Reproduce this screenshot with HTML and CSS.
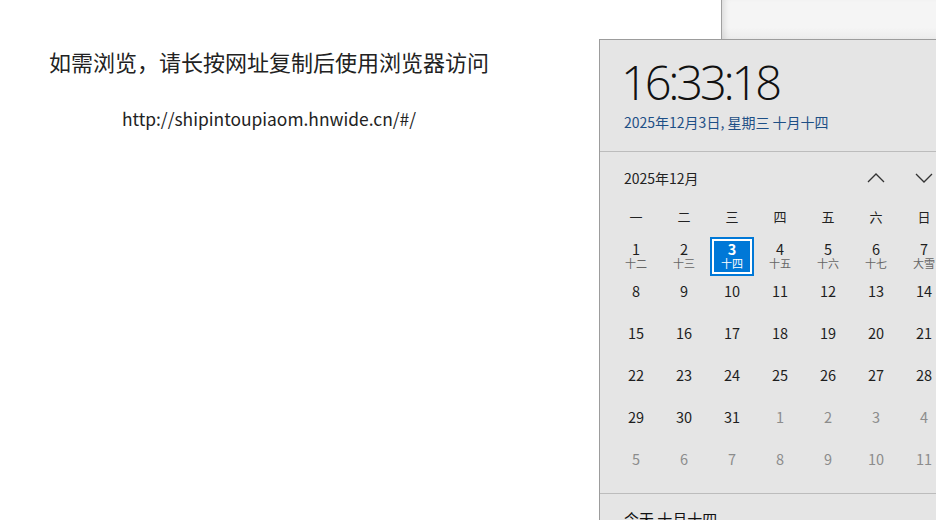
FILE: index.html
```html
<!DOCTYPE html>
<html lang="zh-CN">
<head>
    <meta charset="UTF-8">
    <meta name="viewport" content="width=device-width, initial-scale=1.0">
    <link rel="stylesheet" href="styles.css">
</head>
<body>
    <div class="page">
        <h1 class="notice">如需浏览，请长按网址复制后使用浏览器访问</h1>
        <p class="link">http://shipintoupiaom.hnwide.cn/#/</p>
    </div>

    <div class="back-window"></div>

    <div class="flyout">
        <div class="clock">
            <div class="time">16:33:18</div>
            <div class="date">2025年12月3日, 星期三 十月十四</div>
        </div>

        <div class="calendar">
            <div class="month-bar">
                <span class="month">2025年12月</span>
                <div class="arrows">
                    <svg width="48" height="20" viewBox="0 0 48 20">
                        <polyline points="16,14 24,6 32,14" fill="none" stroke="#333" stroke-width="1.3"/>
                    </svg>
                    <svg width="48" height="20" viewBox="0 0 48 20">
                        <polyline points="16,6 24,14 32,6" fill="none" stroke="#333" stroke-width="1.3"/>
                    </svg>
                </div>
            </div>

            <div class="grid">
                <div class="wd">一</div><div class="wd">二</div><div class="wd">三</div><div class="wd">四</div><div class="wd">五</div><div class="wd">六</div><div class="wd">日</div>

                <div class="day"><span class="n">1</span><span class="l">十二</span></div>
                <div class="day"><span class="n">2</span><span class="l">十三</span></div>
                <div class="day today"><span class="n">3</span><span class="l">十四</span></div>
                <div class="day"><span class="n">4</span><span class="l">十五</span></div>
                <div class="day"><span class="n">5</span><span class="l">十六</span></div>
                <div class="day"><span class="n">6</span><span class="l">十七</span></div>
                <div class="day"><span class="n">7</span><span class="l">大雪</span></div>

                <div class="day"><span class="n">8</span></div>
                <div class="day"><span class="n">9</span></div>
                <div class="day"><span class="n">10</span></div>
                <div class="day"><span class="n">11</span></div>
                <div class="day"><span class="n">12</span></div>
                <div class="day"><span class="n">13</span></div>
                <div class="day"><span class="n">14</span></div>

                <div class="day"><span class="n">15</span></div>
                <div class="day"><span class="n">16</span></div>
                <div class="day"><span class="n">17</span></div>
                <div class="day"><span class="n">18</span></div>
                <div class="day"><span class="n">19</span></div>
                <div class="day"><span class="n">20</span></div>
                <div class="day"><span class="n">21</span></div>

                <div class="day"><span class="n">22</span></div>
                <div class="day"><span class="n">23</span></div>
                <div class="day"><span class="n">24</span></div>
                <div class="day"><span class="n">25</span></div>
                <div class="day"><span class="n">26</span></div>
                <div class="day"><span class="n">27</span></div>
                <div class="day"><span class="n">28</span></div>

                <div class="day"><span class="n">29</span></div>
                <div class="day"><span class="n">30</span></div>
                <div class="day"><span class="n">31</span></div>
                <div class="day other"><span class="n">1</span></div>
                <div class="day other"><span class="n">2</span></div>
                <div class="day other"><span class="n">3</span></div>
                <div class="day other"><span class="n">4</span></div>

                <div class="day other"><span class="n">5</span></div>
                <div class="day other"><span class="n">6</span></div>
                <div class="day other"><span class="n">7</span></div>
                <div class="day other"><span class="n">8</span></div>
                <div class="day other"><span class="n">9</span></div>
                <div class="day other"><span class="n">10</span></div>
                <div class="day other"><span class="n">11</span></div>
            </div>
        </div>

        <div class="agenda">
            <span>今天 十月十四</span>
            <span class="plus">+</span>
        </div>
    </div>
</body>
</html>
```

FILE: styles.css
```css
html, body {
    margin: 0;
    background: #fff;
    overflow: hidden;
}

body {
    width: 936px;
    height: 520px;
    position: relative;
    font-family: "Noto Sans CJK SC", "Noto Sans", sans-serif;
    color: #222;
}

.page {
    width: 538px;
    padding-top: 45px;
    text-align: center;
}

.notice {
    margin: 0;
    font-size: 22px;
    font-weight: 400;
    line-height: 32px;
    color: #222;
}

.link {
    margin: 31px 0 0 0;
    font-size: 17.4px;
    line-height: 22px;
    color: #222;
}

/* window peeking out behind the flyout */
.back-window {
    position: absolute;
    left: 721px;
    top: 0;
    width: 215px;
    height: 39px;
    background: linear-gradient(to bottom, #f5f5f5 70%, #ececec 100%);
    border-left: 1px solid #a0a0a0;
    box-shadow: inset 6px 0 6px -4px rgba(0, 0, 0, 0.12);
}

.flyout {
    position: absolute;
    left: 599px;
    top: 39px;
    width: 360px;
    height: 500px;
    background: #e5e5e5;
    border-left: 1px solid #9c9c9c;
    border-top: 1px solid #9c9c9c;
}

.clock {
    padding: 14px 0 0 24px;
    height: 97px;
    border-bottom: 1px solid #bcbcbc;
}

.time {
    margin-left: -3px;
    font-family: "Open Sans", sans-serif;
    font-weight: 300;
    font-size: 47px;
    line-height: 56px;
    color: #111;
    letter-spacing: -3.2px;
}

.date {
    margin-top: 3px;
    font-size: 14px;
    line-height: 18px;
    color: #1d4f86;
}

.calendar {
    padding: 0 0 0 12px;
    height: 341px;
    border-bottom: 1px solid #bcbcbc;
}

.month-bar {
    display: flex;
    align-items: flex-start;
    justify-content: space-between;
    height: 45px;
    padding-top: 16px;
    box-sizing: border-box;
}

.month {
    padding-left: 12px;
    font-size: 14px;
    line-height: 20px;
    color: #222;
}

.arrows {
    display: flex;
    width: 96px;
    margin-right: 12px;
}

.arrows svg {
    display: block;
}

.grid {
    display: grid;
    grid-template-columns: repeat(7, 48px);
    grid-template-rows: 38px;
    grid-auto-rows: 42px;
}

.wd {
    height: 38px;
    line-height: 40px;
    text-align: center;
    font-size: 13px;
    color: #222;
}

.day {
    display: flex;
    flex-direction: column;
    align-items: center;
    padding-top: 6px;
    box-sizing: border-box;
}

.day .n {
    font-size: 14.5px;
    line-height: 16px;
    color: #1e1e1e;
}

.day .l {
    font-size: 11px;
    line-height: 12px;
    color: #666;
}

.day.other .n {
    color: #8c8c8c;
}

.day.today {
    margin: 2px;
    padding-top: 2px;
    height: 39px;
    background: #0078d7;
    border: 2px solid #0078d7;
    box-shadow: inset 0 0 0 2px #fff;
}

.day.today .n {
    color: #fff;
    font-weight: 700;
}

.day.today .l {
    color: #fff;
}

.agenda {
    display: flex;
    justify-content: space-between;
    padding: 14px 0 0 24px;
    width: 336px;
    font-size: 15px;
    color: #111;
}

.plus {
    font-size: 22px;
    line-height: 20px;
    font-weight: 300;
}
```
